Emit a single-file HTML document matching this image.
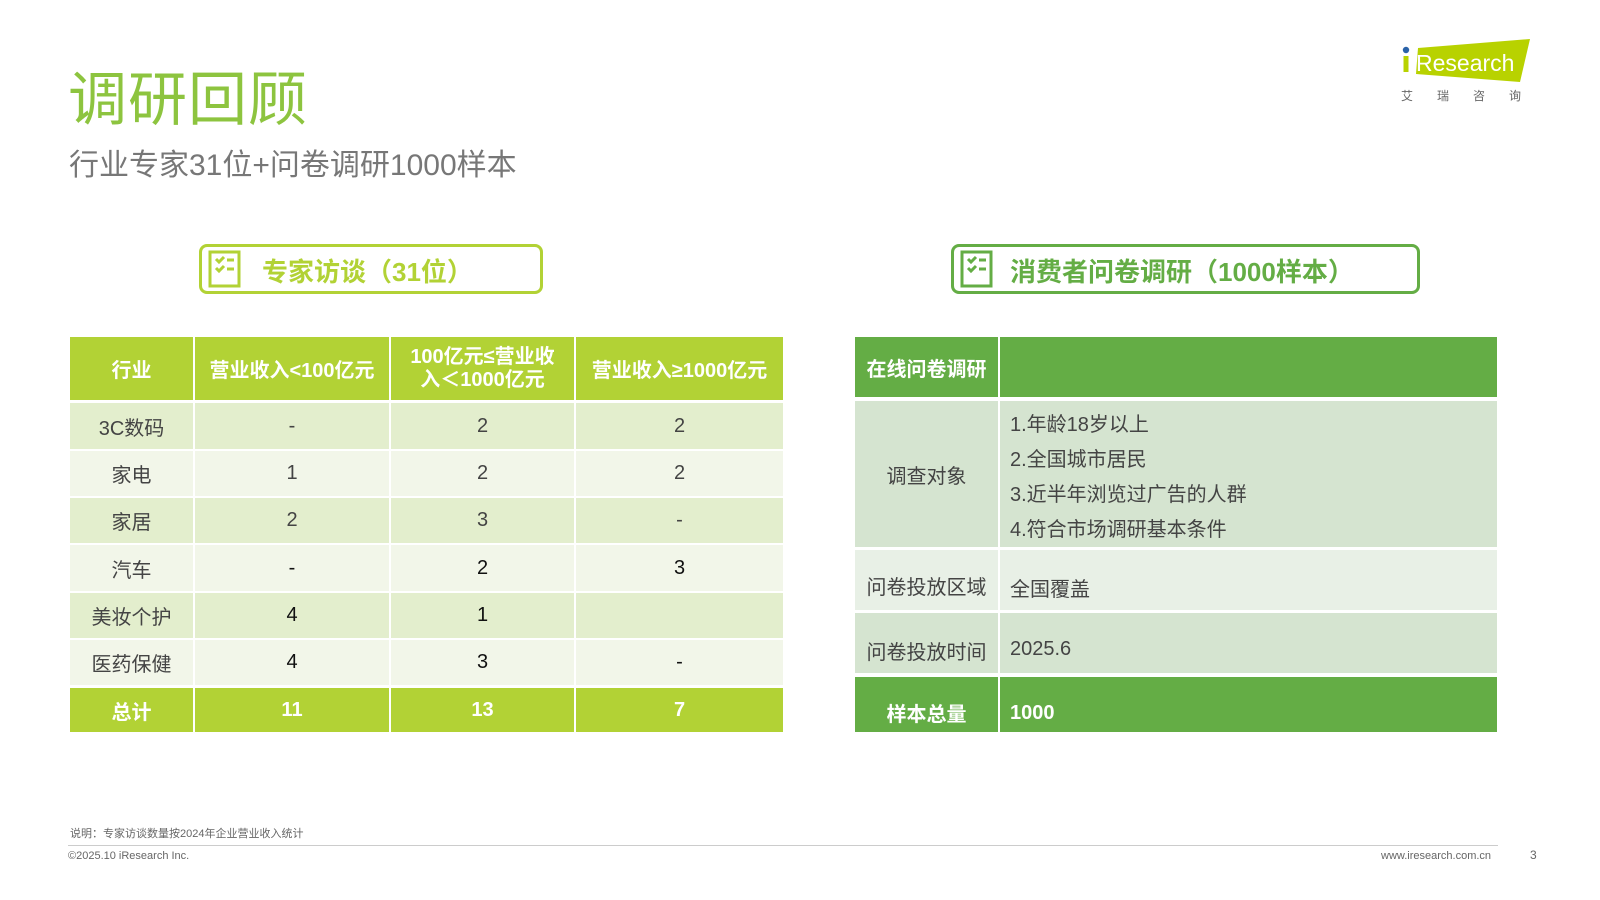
<!DOCTYPE html>
<html><head><meta charset="utf-8"><style>
*{margin:0;padding:0;box-sizing:border-box}
body{width:1600px;height:900px;background:#fff;position:relative;overflow:hidden;font-family:"Liberation Sans","Noto Sans CJK SC",sans-serif;color:#555}
.a{position:absolute}
.c{position:absolute;display:flex;align-items:center;justify-content:center;text-align:center}
.h{color:#fff;font-weight:bold;font-size:20px}
.lh{background:#b2d235}
.r1{background:#e3eecd}.r2{background:#f2f6e9}
.d{font-size:20px;color:#444}
.g{background:#64ad45}
.s1{background:#d5e4d0}.s2{background:#e8f0e6}
</style></head><body>
<div class="a" style="left:68px;top:52px;font-size:59px;color:#8dc43f;letter-spacing:1px">调研回顾</div>
<div class="a" style="left:69px;top:140px;font-size:30px;color:#777">行业专家31位+问卷调研1000样本</div>
<!-- logo -->
<svg class="a" style="left:1398px;top:38px" width="135" height="70" viewBox="0 0 135 70">
<polygon points="20,10 132,1 122,44 18,36" fill="#b8d200"/>
<circle cx="8" cy="12" r="3.2" fill="#2a62a8"/>
<rect x="5.5" y="18" width="5" height="16" fill="#b8d200"/>
<text x="18" y="33" font-family="Liberation Sans" font-size="23" fill="#fff">Research</text>
<text x="3" y="62" font-family="Noto Sans CJK SC" font-size="12" fill="#666" letter-spacing="24">艾瑞咨询</text>
</svg>
<!-- box left -->
<div class="a" style="left:199px;top:244px;width:344px;height:50px;border:3px solid #b2d235;border-radius:8px"></div>
<svg class="a" style="left:208px;top:250px" width="34" height="38" viewBox="0 0 34 38"><g fill="none" stroke="#b2d235" stroke-width="3"><rect x="2" y="2" width="29" height="34"/><path d="M8 9l3 3 5-5M8 18l3 3 5-5M19 10h7M19 19h7"/></g></svg>
<div class="a" style="left:262px;top:252px;font-size:26px;font-weight:bold;color:#b2d235">专家访谈（31位）</div>
<!-- box right -->
<div class="a" style="left:951px;top:244px;width:469px;height:50px;border:3px solid #64ad45;border-radius:8px"></div>
<svg class="a" style="left:960px;top:250px" width="34" height="38" viewBox="0 0 34 38"><g fill="none" stroke="#64ad45" stroke-width="3"><rect x="2" y="2" width="29" height="34"/><path d="M8 9l3 3 5-5M8 18l3 3 5-5M19 10h7M19 19h7"/></g></svg>
<div class="a" style="left:1010px;top:252px;font-size:26px;font-weight:bold;color:#64ad45">消费者问卷调研（1000样本）</div>

<!-- left table -->
<div class="c lh h" style="left:70px;top:337px;width:123px;height:63px">行业</div>
<div class="c lh h" style="left:195px;top:337px;width:194px;height:63px">营业收入&lt;100亿元</div>
<div class="c lh h" style="left:391px;top:337px;width:183px;height:63px;line-height:23px">100亿元≤营业收<br>入＜1000亿元</div>
<div class="c lh h" style="left:576px;top:337px;width:207px;height:63px">营业收入≥1000亿元</div>

<div class="c r1 d" style="left:70px;top:403px;width:123px;height:46px">3C数码</div>
<div class="c r1 d" style="left:195px;top:403px;width:194px;height:46px">-</div>
<div class="c r1 d" style="left:391px;top:403px;width:183px;height:46px">2</div>
<div class="c r1 d" style="left:576px;top:403px;width:207px;height:46px">2</div>

<div class="c r2 d" style="left:70px;top:451px;width:123px;height:45px">家电</div>
<div class="c r2 d" style="left:195px;top:451px;width:194px;height:45px">1</div>
<div class="c r2 d" style="left:391px;top:451px;width:183px;height:45px">2</div>
<div class="c r2 d" style="left:576px;top:451px;width:207px;height:45px">2</div>

<div class="c r1 d" style="left:70px;top:498px;width:123px;height:45px">家居</div>
<div class="c r1 d" style="left:195px;top:498px;width:194px;height:45px">2</div>
<div class="c r1 d" style="left:391px;top:498px;width:183px;height:45px">3</div>
<div class="c r1 d" style="left:576px;top:498px;width:207px;height:45px">-</div>

<div class="c r2 d" style="left:70px;top:545px;width:123px;height:46px">汽车</div>
<div class="c r2 d" style="left:195px;top:545px;width:194px;height:46px;color:#111">-</div>
<div class="c r2 d" style="left:391px;top:545px;width:183px;height:46px;color:#111">2</div>
<div class="c r2 d" style="left:576px;top:545px;width:207px;height:46px;color:#111">3</div>

<div class="c r1 d" style="left:70px;top:593px;width:123px;height:45px">美妆个护</div>
<div class="c r1 d" style="left:195px;top:593px;width:194px;height:45px;color:#111">4</div>
<div class="c r1 d" style="left:391px;top:593px;width:183px;height:45px;color:#111">1</div>
<div class="c r1 d" style="left:576px;top:593px;width:207px;height:45px"></div>

<div class="c r2 d" style="left:70px;top:640px;width:123px;height:45px">医药保健</div>
<div class="c r2 d" style="left:195px;top:640px;width:194px;height:45px;color:#111">4</div>
<div class="c r2 d" style="left:391px;top:640px;width:183px;height:45px;color:#111">3</div>
<div class="c r2 d" style="left:576px;top:640px;width:207px;height:45px;color:#111">-</div>

<div class="c lh h" style="left:70px;top:688px;width:123px;height:44px">总计</div>
<div class="c lh h" style="left:195px;top:688px;width:194px;height:44px">11</div>
<div class="c lh h" style="left:391px;top:688px;width:183px;height:44px">13</div>
<div class="c lh h" style="left:576px;top:688px;width:207px;height:44px">7</div>

<!-- right table -->
<div class="c g h" style="left:855px;top:337px;width:143px;height:60px">在线问卷调研</div>
<div class="a g" style="left:1000px;top:337px;width:497px;height:60px"></div>
<div class="c s1 d" style="left:855px;top:401px;width:143px;height:146px">调查对象</div>
<div class="a s1 d" style="left:1000px;top:401px;width:497px;height:146px;padding:7px 0 0 10px;line-height:35px">1.年龄18岁以上<br>2.全国城市居民<br>3.近半年浏览过广告的人群<br>4.符合市场调研基本条件</div>
<div class="c s2 d" style="left:855px;top:550px;width:143px;height:60px;padding-top:10px">问卷投放区域</div>
<div class="a s2 d" style="left:1000px;top:550px;width:497px;height:60px;padding:23px 0 0 10px">全国覆盖</div>
<div class="c s1 d" style="left:855px;top:613px;width:143px;height:60px;padding-top:14px">问卷投放时间</div>
<div class="a s1 d" style="left:1000px;top:613px;width:497px;height:60px;padding:25px 0 0 10px">2025.6</div>
<div class="c g h" style="left:855px;top:677px;width:143px;height:55px;padding-top:16px">样本总量</div>
<div class="a g h" style="left:1000px;top:677px;width:497px;height:55px;padding:25px 0 0 10px">1000</div>

<!-- footer -->
<div class="a" style="left:70px;top:825px;font-size:11px;color:#666">说明：专家访谈数量按2024年企业营业收入统计</div>
<div class="a" style="left:68px;top:845px;width:1430px;height:1px;background:#ccc"></div>
<div class="a" style="left:68px;top:850px;font-size:11px;color:#666">©2025.10 iResearch Inc.</div>
<div class="a" style="left:1381px;top:850px;font-size:11px;color:#666">www.iresearch.com.cn</div>
<div class="a" style="left:1530px;top:848px;font-size:12px;color:#666">3</div>
</body></html>
